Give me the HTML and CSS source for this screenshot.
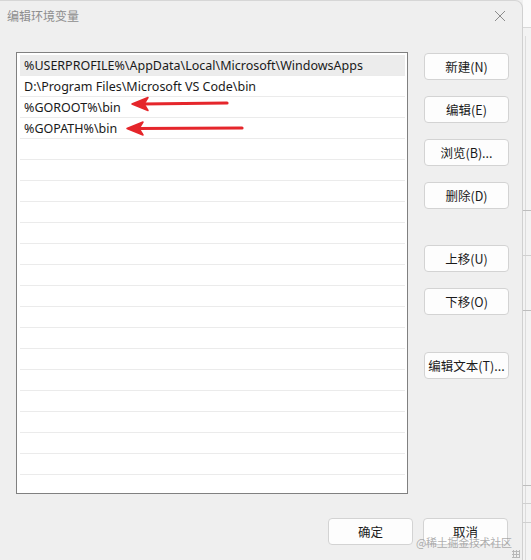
FILE: index.html
```html
<!DOCTYPE html>
<html lang="zh-CN">
<head>
<meta charset="utf-8">
<title>编辑环境变量</title>
<link rel="stylesheet" href="styles.css">
</head>
<body>
<div class="screen">
  <div class="dialog">
    <div class="titlebar">
      <span class="title">编辑环境变量</span>
      <svg class="close" width="12" height="12" viewBox="0 0 12 12"><path d="M1 1 L11 11 M11 1 L1 11" stroke="#8c8c8c" stroke-width="1" fill="none"/></svg>
    </div>
    <div class="content">
      <div class="list">
        <div class="row selected">%USERPROFILE%\AppData\Local\Microsoft\WindowsApps</div>
        <div class="row">D:\Program Files\Microsoft VS Code\bin</div>
        <div class="row">%GOROOT%\bin</div>
        <div class="row">%GOPATH%\bin</div>
        <div class="row"></div><div class="row"></div><div class="row"></div><div class="row"></div>
        <div class="row"></div><div class="row"></div><div class="row"></div><div class="row"></div>
        <div class="row"></div><div class="row"></div><div class="row"></div><div class="row"></div>
        <div class="row"></div><div class="row"></div><div class="row"></div><div class="row"></div>
        <div class="row last"></div>
      </div>
      <div class="side">
        <button class="btn">新建(N)</button>
        <button class="btn">编辑(E)</button>
        <button class="btn">浏览(B)...</button>
        <button class="btn">删除(D)</button>
        <button class="btn gap-lg">上移(U)</button>
        <button class="btn">下移(O)</button>
        <button class="btn gap-xl">编辑文本(T)...</button>
      </div>
    </div>
    <div class="footer">
      <button class="btn">确定</button>
      <button class="btn">取消</button>
    </div>
    <svg class="arrows" width="260" height="50" viewBox="0 0 260 50">
      <g fill="#e5262b" stroke="#e5262b" stroke-linecap="round">
        <line x1="142" y1="13" x2="227" y2="12" stroke-width="3.2"/>
        <path d="M132 13 L148 6.5 L144 13 L148 19.5 Z" stroke-width="1.5" stroke-linejoin="round"/>
        <line x1="137" y1="37.5" x2="242" y2="37" stroke-width="3.2"/>
        <path d="M127 37.5 L143 31 L139 37.5 L143 44 Z" stroke-width="1.5" stroke-linejoin="round"/>
      </g>
    </svg>
    <div class="watermark">@稀土掘金技术社区</div>
    <div class="grip"></div>
  </div>
  <div class="behind">
    <div class="b-top"></div>
    <div class="b-vline"></div>
    <div class="b-line l1"></div>
    <div class="b-line l2"></div>
    <div class="b-line l3"></div>
    <div class="b-line l4"></div>
    <div class="b-line l5"></div>
    <div class="b-line l6"></div>
  </div>
</div>
</body>
</html>
```
FILE: styles.css
```css
* { box-sizing: border-box; }
html, body { margin: 0; padding: 0; }
body {
  width: 531px;
  height: 560px;
  overflow: hidden;
  background: #f0f0f0;
  font-family: "Noto Sans", "Noto Sans CJK SC", sans-serif;
  font-size: 12.5px;
  color: #1a1a1a;
}
.screen {
  display: flex;
  height: 560px;
}
.dialog {
  position: relative;
  width: 523px;
  height: 560px;
  background: #efefef;
  border-top: 1px solid #d6d6d6;
  border-right: 1px solid #d0d0d0;
  border-top-right-radius: 8px;
  flex: none;
}
.titlebar {
  height: 29px;
  display: flex;
  align-items: center;
  justify-content: space-between;
  padding: 0 16px 0 7px;
}
.title {
  font-family: "Noto Sans CJK SC", sans-serif;
  font-size: 12px;
  color: #8d8d8d;
}
.close { display: block; }
.content {
  display: flex;
  align-items: flex-start;
  padding: 22px 0 0 16px;
  gap: 16px;
}
.list {
  width: 392px;
  height: 442px;
  background: #fff;
  border: 1px solid #808080;
  padding: 2px 2px 0 3px;
  overflow: hidden;
}
.row {
  height: 21px;
  border-bottom: 1px solid #ebebeb;
  padding-left: 4px;
  line-height: 21px;
  white-space: nowrap;
}
.row.selected { background: #ececec; }
.row.last { border-bottom: none; }
.side {
  display: flex;
  flex-direction: column;
  gap: 16px;
  padding-top: 1px;
}
.btn {
  width: 85px;
  height: 27px;
  background: #fdfdfd;
  border: 1px solid #d3d3d3;
  border-radius: 4px;
  font-family: "Noto Sans CJK SC", sans-serif;
  font-size: 12.5px;
  color: #1a1a1a;
  padding: 0;
}
.gap-lg { margin-top: 20px; }
.gap-xl { margin-top: 21px; }
.footer {
  display: flex;
  justify-content: flex-end;
  gap: 10px;
  padding: 24px 14px 0 0;
}
.arrows {
  position: absolute;
  left: 0;
  top: 90px;
}
.watermark {
  position: absolute;
  left: 416px;
  top: 533px;
  font-family: "Noto Sans CJK SC", sans-serif;
  font-size: 11px;
  letter-spacing: -0.3px;
  color: rgba(140, 140, 140, 0.7);
  white-space: nowrap;
}
.grip {
  position: absolute;
  right: 2px;
  bottom: 2px;
  width: 8px;
  height: 8px;
  background-image: radial-gradient(circle, #b8b8b8 1px, transparent 1.2px);
  background-size: 3px 3px;
}
.behind {
  position: relative;
  flex: 1;
  background: #f3f3f3;
}
.b-top {
  height: 28px;
  background: #fafafa;
  border-bottom: 1px solid #d8d8d8;
}
.b-vline {
  position: absolute;
  left: 2px;
  top: 36px;
  bottom: 0;
  width: 1px;
  background: #dcdcdc;
}
.b-line {
  position: absolute;
  left: 0;
  right: 0;
  height: 1px;
  background: #bdbdbd;
}
.l1 { top: 210px; }
.l2 { top: 255px; background: #d0d0d0; }
.l3 { top: 310px; }
.l4 { top: 485px; }
.l5 { top: 503px; background: #d0d0d0; }
.l6 { top: 522px; background: #d0d0d0; }
```
